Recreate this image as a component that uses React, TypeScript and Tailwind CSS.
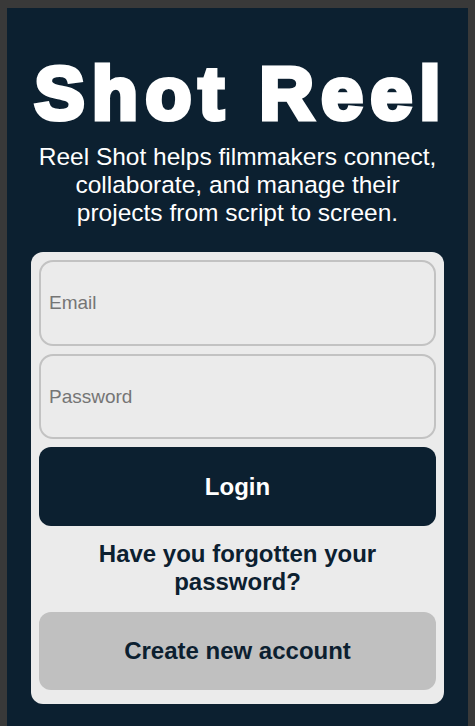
export default function App() {
  return (
    <div className="min-h-screen flex flex-col bg-[#393939] pt-[8px] px-[7px] font-['Liberation_Sans',Arial,sans-serif]">
      <div className="flex-1 bg-[#0c2030] px-6 pt-[39px] pb-6">
        <h1 className="-mx-4 whitespace-nowrap text-center text-white font-bold text-[75px] leading-[92px] tracking-[7.5px] pl-[7.5px] [-webkit-text-stroke:5px_white]">
          Shot Reel
        </h1>
        <p className="mt-[4px] text-center text-white text-[24.5px] leading-[normal]">
          Reel Shot helps filmmakers connect, collaborate, and manage their
          projects from script to screen.
        </p>
        <form
          className="mt-[25px] bg-[#ebebeb] rounded-xl px-2 pt-2 pb-[14px] flex flex-col"
          onSubmit={(e) => e.preventDefault()}
        >
          <input
            type="email"
            placeholder="Email"
            className="h-[86px] w-full rounded-[14px] border-2 border-[#c2c2c2] bg-transparent px-2 text-[19px] text-[#222] placeholder:text-[#757575] outline-none"
          />
          <input
            type="password"
            placeholder="Password"
            className="mt-2 h-[85px] w-full rounded-[14px] border-2 border-[#c2c2c2] bg-transparent px-2 text-[19px] text-[#222] placeholder:text-[#757575] outline-none"
          />
          <button
            type="submit"
            className="mt-2 h-[79px] w-full rounded-xl bg-[#0c2030] text-white text-[24px] font-bold"
          >
            Login
          </button>
          <p className="mt-[14px] text-center text-[#0c2030] text-[24px] font-bold leading-[normal]">
            Have you forgotten your password?
          </p>
          <button
            type="button"
            className="mt-[16px] h-[78px] w-full rounded-xl bg-[#c0c0c0] text-[#0c2030] text-[24px] font-bold"
          >
            Create new account
          </button>
        </form>
      </div>
    </div>
  );
}
